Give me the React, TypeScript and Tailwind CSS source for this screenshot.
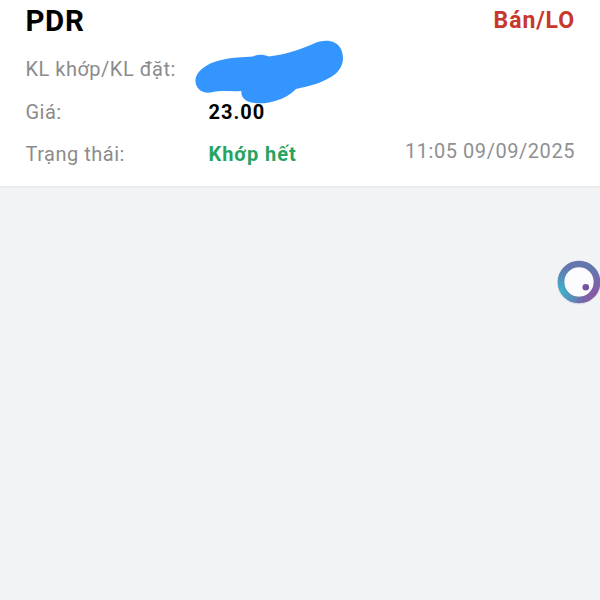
import React from 'react';

interface OrderRowProps {
  label: string;
  children: React.ReactNode;
}

const OrderRow: React.FC<OrderRowProps> = ({ label, children }) => (
  <div className="flex h-[42.5px] text-[20px] leading-[42px]">
    <div className="w-[183px] shrink-0 tracking-[0.5px] text-[#8b8b8d]">{label}</div>
    <div className="flex flex-1 items-start justify-between whitespace-nowrap">{children}</div>
  </div>
);

// Hand-drawn marker that hides the matched volume
const Scribble = () => (
  <svg className="pointer-events-none absolute left-[190px] top-[36px]" width="160" height="72" viewBox="190 36 160 72">
    <path
      d="M195.500 80C196 74 200 70 206 66C217 59 232 57.500 253 56.500C258 54 263 54 269 56.500C286 54.500 302 49 314 43.500C324 39 336 39.500 341 49C346 61 341 71 331 77C321 83 310 86 296 89C289 96 281 100 269 102.500C262 104 252 103.500 247 101C242 98 241 94 241.500 91C230 92 223 90 213 92C203 95 195 89 195.500 80Z"
      fill="#3495ff"
    />
  </svg>
);

const FloatingButton = () => (
  <button type="button" aria-label="Menu" className="absolute left-[553px] top-[257px]">
    <svg width="52" height="52" viewBox="0 0 52 52">
      <defs>
        <radialGradient id="teal" gradientUnits="userSpaceOnUse" cx="8" cy="34" r="24">
          <stop offset="0" stopColor="#3fb2cc" />
          <stop offset="1" stopColor="#3fb2cc" stopOpacity="0" />
        </radialGradient>
        <radialGradient id="purple" gradientUnits="userSpaceOnUse" cx="40" cy="38" r="26">
          <stop offset="0" stopColor="#8a58a4" />
          <stop offset="1" stopColor="#8a58a4" stopOpacity="0" />
        </radialGradient>
      </defs>
      <circle cx="26" cy="25.500" r="22" fill="#c9ced6" opacity="0.5" />
      <circle cx="26" cy="25" r="18" fill="#fcfcfe" stroke="#6376ae" strokeWidth="6.500" />
      <circle cx="26" cy="25" r="18" fill="none" stroke="url(#purple)" strokeWidth="6.500" />
      <circle cx="26" cy="25" r="18" fill="none" stroke="url(#teal)" strokeWidth="6.500" />
      <circle cx="32.800" cy="30.200" r="3.300" fill="#75549c" />
    </svg>
  </button>
);

const App: React.FC = () => {
  return (
    <div className="relative h-[600px] w-[600px] overflow-hidden bg-[#f1f3f5] font-[Roboto,sans-serif]">
      {/* Order card */}
      <section className="relative h-[188px] border-b-2 border-[#e9eaec] bg-white pl-[25.5px] pr-[25px]">
        <div className="flex h-[48px] items-start justify-between font-bold">
          <h1 className="text-[29.5px] leading-[42px] tracking-[0.6px] text-black">PDR</h1>
          <span className="text-[23px] leading-[41px] tracking-[0.9px] text-[#c8372d]">Bán/LO</span>
        </div>

        <OrderRow label="KL khớp/KL đặt:">
          <Scribble />
        </OrderRow>
        <OrderRow label="Giá:">
          <span className="font-bold tracking-[1px] text-black">23.00</span>
        </OrderRow>
        <OrderRow label="Trạng thái:">
          <span className="font-bold tracking-[0.95px] text-[#27a35f]">Khớp hết</span>
          <span className="leading-[36px] tracking-[0.55px] text-[#8e9092]">11:05 09/09/2025</span>
        </OrderRow>
      </section>

      <FloatingButton />
    </div>
  );
};

export default App;
